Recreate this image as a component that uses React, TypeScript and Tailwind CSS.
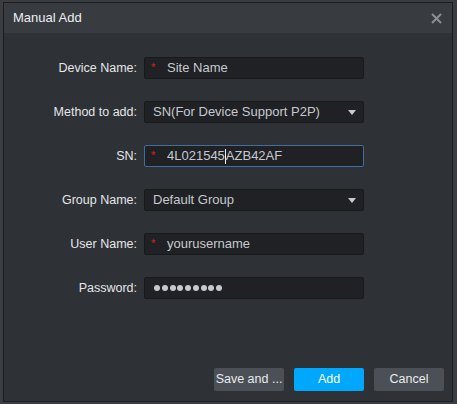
import React from "react";

const font = { fontFamily: '"Liberation Sans", Arial, sans-serif' };

function Label({ children }: { children: React.ReactNode }) {
  return (
    <div className="w-[140px] shrink-0 pr-[7px] text-right text-[12.5px] text-[#e4e6e8]">{children}</div>
  );
}

function Star() {
  return <span className="text-[#e21b1b] text-[11px] leading-none relative top-[-1px] w-[16px] shrink-0">*</span>;
}

function Arrow() {
  return (
    <svg width="8" height="5" viewBox="0 0 8 5" className="ml-auto">
      <path d="M0 0 L8 0 L4 5 Z" fill="#c6cacf" />
    </svg>
  );
}

export default function App() {
  return (
    <div className="w-[457px] h-[404px] bg-[#3a3d41] pt-[2px] pl-[3px]" style={font}>
      <div className="w-[450px] h-[400px] border border-[#1b1d20] bg-[#2e3136] flex flex-col">
        <div className="h-[30px] bg-[#383b40] flex items-center pl-[9px] pr-[10px] shrink-0">
          <span className="text-[13px] text-[#eceef0]">Manual Add</span>
          <svg width="11" height="11" viewBox="0 0 11 11" className="ml-auto">
            <path d="M1 1 L10 10 M10 1 L1 10" stroke="#8b8f94" strokeWidth="2" />
          </svg>
        </div>
        <div className="flex flex-col gap-[22px] pt-[24px]">
          <div className="flex items-center h-[22px]">
            <Label>Device Name:</Label>
            <div className="w-[220px] h-[22px] bg-[#1f2124] border border-[#17191b] rounded-[2px] flex items-center pl-[6px] text-[13px] text-[#c6cacf]">
              <Star />
              <span>Site Name</span>
            </div>
          </div>
          <div className="flex items-center h-[22px]">
            <Label>Method to add:</Label>
            <div className="w-[220px] h-[22px] bg-[#1f2124] border border-[#17191b] rounded-[2px] flex items-center pl-[8px] pr-[7px] text-[13px] text-[#c6cacf]">
              <span>SN(For Device Support P2P)</span>
              <Arrow />
            </div>
          </div>
          <div className="flex items-center h-[22px]">
            <Label>SN:</Label>
            <div className="w-[220px] h-[22px] bg-[#1f2124] border border-[#3f6f9f] rounded-[2px] flex items-center pl-[6px] text-[13px] text-[#c6cacf]">
              <Star />
              <span>4L021545</span>
              <span className="inline-block w-[1px] h-[15px] bg-[#f0f0f0]" />
              <span>AZB42AF</span>
            </div>
          </div>
          <div className="flex items-center h-[22px]">
            <Label>Group Name:</Label>
            <div className="w-[220px] h-[22px] bg-[#1f2124] border border-[#17191b] rounded-[2px] flex items-center pl-[8px] pr-[7px] text-[13px] text-[#c6cacf]">
              <span>Default Group</span>
              <Arrow />
            </div>
          </div>
          <div className="flex items-center h-[22px]">
            <Label>User Name:</Label>
            <div className="w-[220px] h-[22px] bg-[#1f2124] border border-[#17191b] rounded-[2px] flex items-center pl-[6px] text-[13px] text-[#c6cacf]">
              <Star />
              <span>yourusername</span>
            </div>
          </div>
          <div className="flex items-center h-[22px]">
            <Label>Password:</Label>
            <div className="w-[220px] h-[22px] bg-[#1f2124] border border-[#17191b] rounded-[2px] flex items-center pl-[9px] gap-[1.75px]">
              {Array.from({ length: 9 }).map((_, i) => (
                <span key={i} className="w-[6px] h-[6px] rounded-full bg-[#c6cacf]" />
              ))}
            </div>
          </div>
        </div>
        <div className="mt-auto flex justify-end gap-[10px] pr-[8px] pb-[10px]">
          <button className="w-[70px] h-[23px] bg-[#4b5057] rounded-[2px] text-[12.5px] text-[#e8eaec]">Save and ...</button>
          <button className="w-[70px] h-[23px] bg-[#00a8fd] rounded-[2px] text-[12.5px] text-[#ffffff]">Add</button>
          <button className="w-[70px] h-[23px] bg-[#4b5057] rounded-[2px] text-[12.5px] text-[#e8eaec]">Cancel</button>
        </div>
      </div>
    </div>
  );
}
